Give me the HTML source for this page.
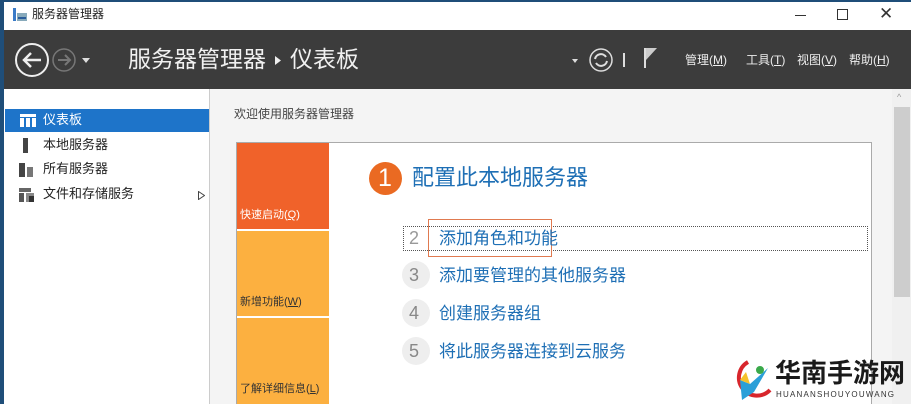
<!DOCTYPE html>
<html><head><meta charset="utf-8"><style>
*{margin:0;padding:0;box-sizing:border-box}
body{width:911px;height:404px;overflow:hidden;background:#fff;font-family:"Liberation Sans","Noto Sans CJK SC",sans-serif;position:relative}
.a{position:absolute}
.t{white-space:nowrap;line-height:1.2}
</style></head><body>
<div class="a" style="left:0;top:0;width:4px;height:404px;background:#1f4e79"></div>
<div class="a" style="left:0;top:0;width:911px;height:2px;background:#1f4e79"></div>
<div class="a" style="left:4px;top:2px;width:907px;height:28px;background:#fff"></div>
<svg class="a" style="left:12px;top:8px" width="16" height="14"><rect x="1" y="0" width="3" height="13" fill="#3a7bc8"/><rect x="5" y="5" width="10" height="8" fill="#8ab"/><rect x="6" y="9" width="8" height="2" fill="#2a5c9a"/></svg>
<div class="a t" style="left:32px;top:7px;font-size:12px;color:#222">服务器管理器</div>
<div class="a" style="left:795px;top:15px;width:11px;height:1px;background:#333"></div>
<div class="a" style="left:837px;top:9px;width:11px;height:11px;border:1px solid #333"></div>
<div class="a t" style="left:879px;top:4px;font-size:17px;color:#333;font-family:'DejaVu Sans'">✕</div>
<div class="a" style="left:4px;top:30px;width:907px;height:59px;background:#3c3c3c"></div>
<svg class="a" style="left:14px;top:42px" width="82" height="36"><circle cx="18" cy="18" r="16" fill="none" stroke="#eee" stroke-width="2"/><path d="M27 18H10M17 11l-7 7 7 7" fill="none" stroke="#eee" stroke-width="2.5"/><circle cx="50" cy="18" r="11" fill="none" stroke="#777" stroke-width="1.5"/><path d="M44 18h11M51 13l5 5-5 5" fill="none" stroke="#777" stroke-width="2"/><path d="M68 16h8l-4 5z" fill="#ddd"/></svg>
<div class="a t" style="left:128px;top:46px;font-size:23px;color:#f0f0f0">服务器管理器</div>
<svg class="a" style="left:275px;top:56px" width="6" height="9"><path d="M0 0l6 4.5L0 9z" fill="#eee"/></svg>
<div class="a t" style="left:290px;top:46px;font-size:23px;color:#f0f0f0">仪表板</div>
<svg class="a" style="left:570px;top:45px" width="100" height="28"><path d="M2 14h6l-3 4z" fill="#ddd"/><circle cx="31" cy="15" r="11" fill="none" stroke="#ddd" stroke-width="1.5"/><path d="M25 14a6 6 0 0 1 11-2M37 16a6 6 0 0 1-11 2" fill="none" stroke="#ddd" stroke-width="2"/><rect x="53" y="8" width="2" height="14" fill="#ddd"/><path d="M75 3v20" stroke="#ddd" stroke-width="2"/><path d="M76 3h11l-11 12z" fill="#ccc"/></svg>
<div class="a t" style="left:685px;top:53px;font-size:12px;color:#eee">管理(<u>M</u>)</div>
<div class="a t" style="left:746px;top:53px;font-size:12px;color:#eee">工具(<u>T</u>)</div>
<div class="a t" style="left:797px;top:53px;font-size:12px;color:#eee">视图(<u>V</u>)</div>
<div class="a t" style="left:849px;top:53px;font-size:12px;color:#eee">帮助(<u>H</u>)</div>
<div class="a" style="left:4px;top:89px;width:205px;height:315px;background:#fff"></div>
<div class="a" style="left:209px;top:89px;width:1px;height:315px;background:#ccc"></div>
<div class="a" style="left:5px;top:109px;width:204px;height:23px;background:#1e74c9"></div>
<svg class="a" style="left:20px;top:114px" width="16" height="13"><rect width="16" height="3" fill="#fff"/><rect y="4" width="4" height="9" fill="#fff"/><rect x="6" y="4" width="4" height="9" fill="#fff"/><rect x="12" y="4" width="4" height="9" fill="#fff"/></svg>
<div class="a t" style="left:43px;top:112px;font-size:13px;color:#fff">仪表板</div>
<div class="a" style="left:23px;top:138px;width:5px;height:15px;background:#444"></div>
<div class="a t" style="left:43px;top:137px;font-size:13px;color:#222">本地服务器</div>
<svg class="a" style="left:19px;top:163px" width="16" height="14"><rect width="6" height="14" fill="#444"/><rect x="8" y="4" width="6" height="10" fill="#777"/></svg>
<div class="a t" style="left:43px;top:161px;font-size:13px;color:#222">所有服务器</div>
<svg class="a" style="left:19px;top:188px" width="16" height="14"><rect width="12" height="4" fill="#666"/><rect y="5" width="5" height="9" fill="#555"/><rect x="7" y="5" width="8" height="9" fill="#888"/><rect x="10" y="8" width="5" height="6" fill="#333"/></svg>
<div class="a t" style="left:43px;top:186px;font-size:13px;color:#222">文件和存储服务</div>
<svg class="a" style="left:198px;top:191px" width="7" height="9"><path d="M0.5 0.5l6 4-6 4z" fill="none" stroke="#444"/></svg>
<div class="a" style="left:210px;top:89px;width:682px;height:315px;background:#f4f4f4"></div>
<div class="a t" style="left:234px;top:107px;font-size:12px;color:#444">欢迎使用服务器管理器</div>
<div class="a" style="left:892px;top:89px;width:19px;height:315px;background:#f0f0f0"></div>
<div class="a t" style="left:897px;top:92px;font-size:9px;color:#999">^</div>
<div class="a" style="left:894px;top:107px;width:16px;height:190px;background:#cdcdcd"></div>
<div class="a" style="left:236px;top:142px;width:636px;height:262px;background:#fff;border:1px solid #aaa;border-bottom:none"></div>
<div class="a" style="left:237px;top:143px;width:92px;height:86px;background:#f0622a"></div>
<div class="a" style="left:237px;top:231px;width:92px;height:85px;background:#fcb040"></div>
<div class="a" style="left:237px;top:318px;width:92px;height:86px;background:#fcb040"></div>
<div class="a t" style="left:240px;top:209px;font-size:11px;color:#fff">快速启动(<u>Q</u>)</div>
<div class="a t" style="left:240px;top:296px;font-size:11px;color:#333">新增功能(<u>W</u>)</div>
<div class="a t" style="left:240px;top:383px;font-size:11px;color:#333">了解详细信息(<u>L</u>)</div>
<div class="a" style="left:369px;top:162px;width:33px;height:33px;border-radius:50%;background:#ea6a22"></div>
<div class="a t" style="left:378px;top:163px;font-size:25px;color:#fff">1</div>
<div class="a t" style="left:412px;top:167px;font-size:22px;color:#1e6fb5;line-height:1">配置此本地服务器</div>
<div class="a" style="left:403px;top:226px;width:465px;height:25px;border:1px dotted #555"></div>
<div class="a" style="left:428px;top:219px;width:124px;height:38px;border:1px solid #e07a50"></div>
<div class="a t" style="left:409px;top:229px;font-size:18px;color:#999;line-height:1">2</div>
<div class="a t" style="left:439px;top:230px;font-size:17px;color:#1e6fb5;line-height:1">添加角色和功能</div>
<div class="a" style="left:402px;top:261px;width:28px;height:28px;border-radius:50%;background:#eee"></div>
<div class="a t" style="left:409px;top:266px;font-size:18px;color:#888;line-height:1">3</div>
<div class="a t" style="left:439px;top:267px;font-size:17px;color:#1e6fb5;line-height:1">添加要管理的其他服务器</div>
<div class="a" style="left:402px;top:299px;width:28px;height:28px;border-radius:50%;background:#eee"></div>
<div class="a t" style="left:409px;top:304px;font-size:18px;color:#888;line-height:1">4</div>
<div class="a t" style="left:439px;top:305px;font-size:17px;color:#1e6fb5;line-height:1">创建服务器组</div>
<div class="a" style="left:402px;top:337px;width:28px;height:28px;border-radius:50%;background:#eee"></div>
<div class="a t" style="left:409px;top:342px;font-size:18px;color:#888;line-height:1">5</div>
<div class="a t" style="left:439px;top:343px;font-size:17px;color:#1e6fb5;line-height:1">将此服务器连接到云服务</div>
<svg class="a" style="left:730px;top:358px" width="44" height="46"><path d="M18 4a18 18 0 1 0 22 28" fill="none" stroke="#d8262c" stroke-width="4"/><path d="M10 22l10 4 18-16-14 24-12 8z" fill="#2a9fd8"/><path d="M10 22l6-8 4 12z" fill="#f5c12a"/><circle cx="30" cy="12" r="4" fill="#3aa94a"/></svg>
<div class="a t" style="left:775px;top:360px;font-size:26px;font-weight:bold;color:#1a1a1a;line-height:1">华南手游网</div>
<div class="a t" style="left:776px;top:391px;font-size:8px;color:#333;letter-spacing:1.2px;line-height:1">HUANANSHOUYOUWANG</div>
</body></html>
